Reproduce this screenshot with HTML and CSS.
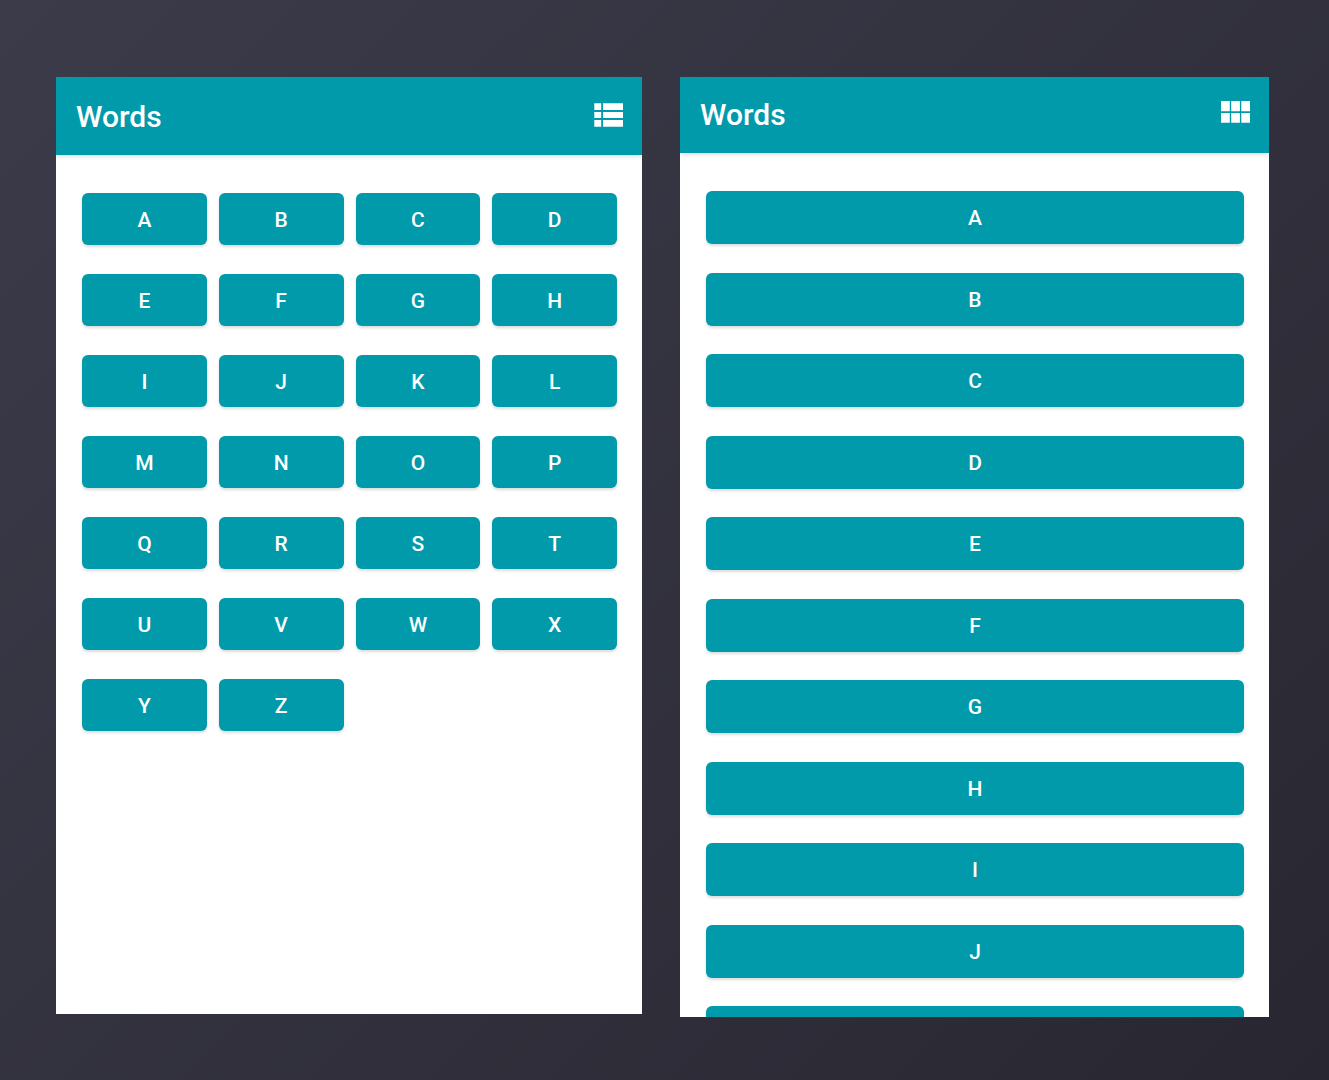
FILE: index.html
```html
<!DOCTYPE html>
<html lang="en">
<head>
  <meta charset="utf-8">
  <meta name="viewport" content="width=device-width, initial-scale=1">
  <title>Words</title>
  <link rel="stylesheet" href="styles.css">
</head>
<body>
  <main class="stage">
    <section class="screen screen-grid">
      <header class="app-bar">
        <h1 class="title">Words</h1>
        <button class="icon-button" type="button" aria-label="Switch to list layout">
          <svg width="29" height="24" viewBox="0 0 29 24" fill="currentColor" aria-hidden="true"><path d="M0.3 0.3h6.9v6.6H0.3zM9 0.3h20v6.6H9zM0.3 8.9h6.9v6.2H0.3zM9 8.9h20v6.2H9zM0.3 17.1h6.9v6.6H0.3zM9 17.1h20v6.6H9z"/></svg>
        </button>
      </header>
      <div class="letters letters-grid">
        <button class="letter" type="button">A</button>
        <button class="letter" type="button">B</button>
        <button class="letter" type="button">C</button>
        <button class="letter" type="button">D</button>
        <button class="letter" type="button">E</button>
        <button class="letter" type="button">F</button>
        <button class="letter" type="button">G</button>
        <button class="letter" type="button">H</button>
        <button class="letter" type="button">I</button>
        <button class="letter" type="button">J</button>
        <button class="letter" type="button">K</button>
        <button class="letter" type="button">L</button>
        <button class="letter" type="button">M</button>
        <button class="letter" type="button">N</button>
        <button class="letter" type="button">O</button>
        <button class="letter" type="button">P</button>
        <button class="letter" type="button">Q</button>
        <button class="letter" type="button">R</button>
        <button class="letter" type="button">S</button>
        <button class="letter" type="button">T</button>
        <button class="letter" type="button">U</button>
        <button class="letter" type="button">V</button>
        <button class="letter" type="button">W</button>
        <button class="letter" type="button">X</button>
        <button class="letter" type="button">Y</button>
        <button class="letter" type="button">Z</button>
      </div>
    </section>

    <section class="screen screen-list">
      <header class="app-bar">
        <h1 class="title">Words</h1>
        <button class="icon-button" type="button" aria-label="Switch to grid layout">
          <svg width="29" height="22" viewBox="0 0 29 22" fill="currentColor" aria-hidden="true"><path d="M0 0h8.8v10.2H0zM10.2 0h8.7v10.2h-8.7zM20.3 0H29v10.2h-8.7zM0 11.9h8.8v9.9H0zM10.2 11.9h8.7v9.9h-8.7zM20.3 11.9H29v9.9h-8.7z"/></svg>
        </button>
      </header>
      <div class="letters letters-list">
        <button class="letter" type="button">A</button>
        <button class="letter" type="button">B</button>
        <button class="letter" type="button">C</button>
        <button class="letter" type="button">D</button>
        <button class="letter" type="button">E</button>
        <button class="letter" type="button">F</button>
        <button class="letter" type="button">G</button>
        <button class="letter" type="button">H</button>
        <button class="letter" type="button">I</button>
        <button class="letter" type="button">J</button>
        <button class="letter" type="button" aria-label="K"></button>
      </div>
    </section>
  </main>
</body>
</html>
```
FILE: styles.css
```css
* {
  box-sizing: border-box;
}

body {
  margin: 0;
  font-family: Roboto, "Liberation Sans", sans-serif;
  background: #2c2b38;
}

.stage {
  display: grid;
  grid-template-columns: 586fr 589fr;
  gap: 38px;
  min-height: 100vh;
  padding: 77px 60px 63px 56px;
  background: linear-gradient(135deg, #3c3b4a, #282731);
}

.screen {
  display: flex;
  flex-direction: column;
  min-width: 0;
  overflow: hidden;
  background: #fff;
}

.screen-grid {
  margin-bottom: 3px;
}

.app-bar {
  display: flex;
  align-items: flex-start;
  justify-content: space-between;
  height: 78px;
  padding: 26px 19px 0 20px;
  color: #fff;
  background: #009aab;
  box-shadow: 0 1px 5px rgba(0, 0, 0, 0.16);
}

.screen-list .app-bar {
  height: 76px;
  padding-top: 24px;
}

.title {
  margin: 0;
  font-size: 30px;
  font-weight: 500;
  line-height: 28px;
}

.icon-button {
  display: flex;
  padding: 0;
  border: 0;
  color: inherit;
  background: none;
  cursor: pointer;
}

.letters {
  padding: 38px 25px 0 26px;
}

.letters-grid {
  display: grid;
  grid-template-columns: repeat(4, 1fr);
  gap: 29px 12px;
}

.letters-list {
  display: flex;
  flex: 1;
  flex-direction: column;
  justify-content: space-between;
  gap: 16px;
  margin-bottom: -42px;
}

.letter {
  height: 52px;
  padding: 2px 0 0;
  border: 0;
  border-radius: 6px;
  font: 500 21px/24px Roboto, "Liberation Sans", sans-serif;
  color: #fff;
  background: #009aab;
  box-shadow: 0 2px 3px rgba(0, 0, 0, 0.14);
  cursor: pointer;
}

.letters-list .letter {
  flex: none;
  height: 53px;
  padding-top: 1px;
}
```
